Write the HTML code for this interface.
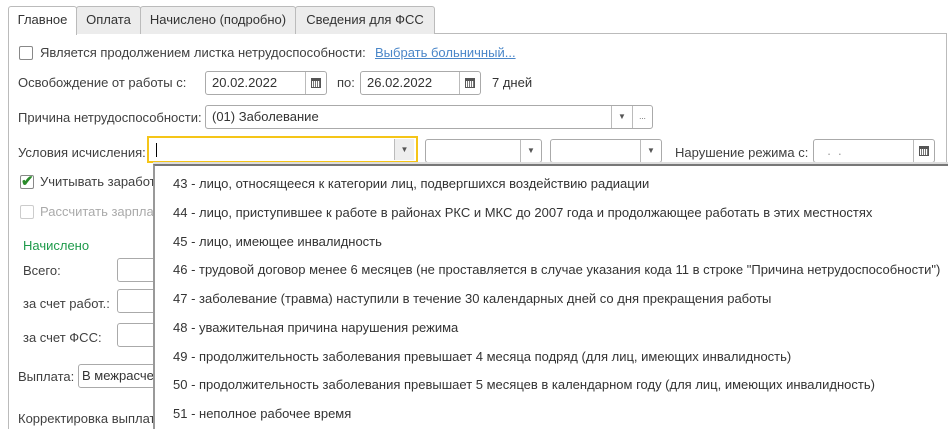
<!DOCTYPE html>
<html style="overflow:hidden;width:948px;height:429px"><head><meta charset="utf-8"><style>
*{box-sizing:border-box;margin:0;padding:0}
body{width:948px;height:429px;overflow:hidden;background:#fff;font-family:"Liberation Sans",Arial,sans-serif;font-size:13px;color:#404040;position:relative}
.a{position:absolute;white-space:nowrap}
.tab{position:absolute;top:6px;height:28px;border:1px solid #bbb;border-bottom:none;background:#ececec;border-radius:3px 3px 0 0;line-height:26px;text-align:center;color:#333}
.f{position:absolute;border:1px solid #aaa;border-radius:3px;background:#fff;height:24px;line-height:22px;padding-left:6px;color:#333;white-space:nowrap;overflow:hidden}
.b{position:absolute;top:0;bottom:0;border-left:1px solid #bbb;width:21px;text-align:center;font-size:8px;color:#555}
.cal{position:absolute;left:5px;top:6px;width:10px;height:10px;border:1px solid #555;border-top:3px solid #555;background:repeating-linear-gradient(90deg,#fff 0 1px,#777 1px 2px)}
.cb{position:absolute;width:14px;height:14px;border:1px solid #888;border-radius:2px;background:#fff}
.it{position:absolute;left:173px;color:#333;white-space:nowrap}
</style></head><body>
<div class="a" style="left:8px;top:33px;width:939px;height:396px;border:1px solid #bbb;border-bottom:none"></div>
<div class="tab" style="left:8px;width:69px;background:#fff;height:29px;z-index:2">Главное</div>
<div class="tab" style="left:76px;width:65px">Оплата</div>
<div class="tab" style="left:140px;width:156px">Начислено (подробно)</div>
<div class="tab" style="left:295px;width:140px">Сведения для ФСС</div>

<div class="cb" style="left:19px;top:46px"></div>
<div class="a" style="left:40px;top:45px">Является продолжением листка нетрудоспособности:</div>
<div class="a" style="left:375px;top:45px;color:#4a86c8;text-decoration:underline">Выбрать больничный...</div>

<div class="a" style="left:18px;top:75px">Освобождение от работы с:</div>
<div class="f" style="left:205px;top:71px;width:122px">20.02.2022<div class="b" style="right:0"><div class="cal"></div></div></div>
<div class="a" style="left:337px;top:75px">по:</div>
<div class="f" style="left:360px;top:71px;width:121px">26.02.2022<div class="b" style="right:0"><div class="cal"></div></div></div>
<div class="a" style="left:492px;top:75px;color:#333">7 дней</div>

<div class="a" style="left:18px;top:110px">Причина нетрудоспособности:</div>
<div class="f" style="left:205px;top:105px;width:448px">(01) Заболевание<div class="b" style="right:20px">▼</div><div class="b" style="right:0;width:20px">...</div></div>

<div class="a" style="left:18px;top:145px">Условия исчисления:</div>
<div class="a" style="left:147px;top:136px;width:271px;height:27px;border:2px solid #f5c518;background:#fff"><div class="a" style="left:7px;top:5px;width:1px;height:14px;background:#000"></div><div class="b" style="right:2px;top:1px;bottom:1px;background:#eee;width:20px;line-height:22px">▼</div></div>
<div class="f" style="left:425px;top:139px;width:117px"><div class="b" style="right:0;line-height:22px">▼</div></div>
<div class="f" style="left:550px;top:139px;width:112px"><div class="b" style="right:0;line-height:22px">▼</div></div>
<div class="a" style="left:675px;top:145px">Нарушение режима с:</div>
<div class="f" style="left:813px;top:139px;width:122px;color:#999">&nbsp;&nbsp;. &nbsp;.<div class="b" style="right:0"><div class="cal"></div></div></div>

<div class="cb" style="left:20px;top:175px"><span style="position:absolute;left:0;top:-4px;color:#2a8a2a;font-size:15px;font-weight:bold">✔</span></div>
<div class="a" style="left:40px;top:174px">Учитывать заработок</div>
<div class="cb" style="left:20px;top:205px;border-color:#ccc"></div>
<div class="a" style="left:40px;top:204px;color:#aaa">Рассчитать зарплату</div>
<div class="a" style="left:23px;top:238px;color:#1e9a4a">Начислено</div>
<div class="a" style="left:23px;top:263px">Всего:</div>
<div class="f" style="left:117px;top:258px;width:60px"></div>
<div class="a" style="left:23px;top:296px">за счет работ.:</div>
<div class="f" style="left:117px;top:289px;width:60px"></div>
<div class="a" style="left:23px;top:330px">за счет ФСС:</div>
<div class="f" style="left:117px;top:323px;width:60px"></div>
<div class="a" style="left:18px;top:369px">Выплата:</div>
<div class="f" style="left:78px;top:364px;width:100px;padding-left:3px">В межрасчетный</div>
<div class="a" style="left:18px;top:411px">Корректировка выплаты</div>

<div class="a" style="left:153px;top:164px;width:795px;height:265px;background:#fff;border-left:2px solid #999;border-top:2px solid #777;box-shadow:0 -2px 0 #ddd"></div>
<div class="it" style="top:176px">43 - лицо, относящееся к категории лиц, подвергшихся воздействию радиации</div>
<div class="it" style="top:205px">44 - лицо, приступившее к работе в районах РКС и МКС до 2007 года и продолжающее работать в этих местностях</div>
<div class="it" style="top:234px">45 - лицо, имеющее инвалидность</div>
<div class="it" style="top:262px">46 - трудовой договор менее 6 месяцев (не проставляется в случае указания кода 11 в строке "Причина нетрудоспособности")</div>
<div class="it" style="top:291px">47 - заболевание (травма) наступили в течение 30 календарных дней со дня прекращения работы</div>
<div class="it" style="top:320px">48 - уважительная причина нарушения режима</div>
<div class="it" style="top:349px">49 - продолжительность заболевания превышает 4 месяца подряд (для лиц, имеющих инвалидность)</div>
<div class="it" style="top:377px">50 - продолжительность заболевания превышает 5 месяцев в календарном году (для лиц, имеющих инвалидность)</div>
<div class="it" style="top:406px">51 - неполное рабочее время</div>
</body></html>
